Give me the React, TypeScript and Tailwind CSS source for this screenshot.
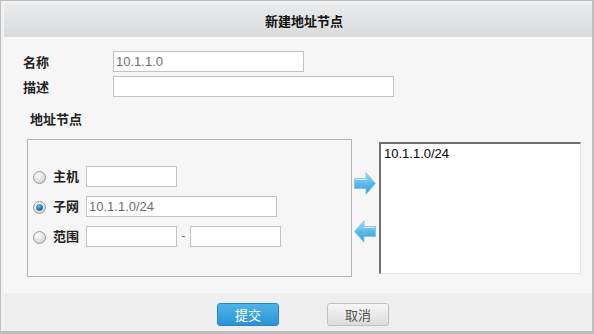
import React from "react";

const cjk = '"Noto Sans CJK SC", "Liberation Sans", sans-serif';
const latin = '"Liberation Sans", Arial, sans-serif';

function Radio({ checked }: { checked?: boolean }) {
  return (
    <svg width="13" height="13" viewBox="0 0 13 13" className="shrink-0">
      <defs>
        <radialGradient id={checked ? "rg1" : "rg0"} cx="40%" cy="35%" r="70%">
          <stop offset="0%" stopColor="#ffffff" />
          <stop offset="100%" stopColor="#cfcfcf" />
        </radialGradient>
        <radialGradient id="dot" cx="40%" cy="35%" r="70%">
          <stop offset="0%" stopColor="#6cc4f4" />
          <stop offset="60%" stopColor="#1a78c2" />
          <stop offset="100%" stopColor="#0c4f8c" />
        </radialGradient>
      </defs>
      <circle cx="6.5" cy="6.5" r="6" fill={`url(#${checked ? "rg1" : "rg0"})`} stroke="#9a9a9a" strokeWidth="1" />
      {checked && <circle cx="6.5" cy="6.5" r="3.3" fill="url(#dot)" />}
    </svg>
  );
}

function Arrow({ dir }: { dir: "right" | "left" }) {
  const id = dir === "right" ? "ag-r" : "ag-l";
  return (
    <svg width="22" height="23" viewBox="0 0 22 23" className={dir === "left" ? "-scale-x-100" : ""}>
      <defs>
        <linearGradient id={id} x1="0" y1="0" x2="0" y2="1">
          <stop offset="0%" stopColor="#a6dcf6" />
          <stop offset="50%" stopColor="#5ab9e9" />
          <stop offset="100%" stopColor="#3b9fd8" />
        </linearGradient>
      </defs>
      <path d="M0.5 6.5 H12 V0.8 L21.5 11.5 L12 22.2 V16.5 H0.5 Z" fill={`url(#${id})`} stroke="#7cc3ea" strokeWidth="0.8" />
      <path d="M1.5 7.5 H12.5" stroke="#d4effc" strokeWidth="1" />
    </svg>
  );
}

function Input({ w, value }: { w: string; value?: string }) {
  return (
    <div
      className={`${w} h-[21px] shrink-0 border border-[#c2c2c2] bg-white pl-[2px] text-[13px] leading-[19px] text-[#6e6e6e]`}
      style={{ fontFamily: latin }}
    >
      {value}
    </div>
  );
}

export default function App() {
  return (
    <div className="w-[594px] h-[334px] border-l border-t border-r-2 border-b-[3px] border-[#bdbdbd] bg-[#f2f2f2] pl-[3px] pt-[3px] flex flex-col">
      {/* header */}
      <div
        className="h-[33px] shrink-0 flex items-center justify-center pl-[12px] bg-gradient-to-b from-[#eaebed] to-[#d9dadc] text-[13px] font-bold text-[#111]"
        style={{ fontFamily: cjk }}
      >
        新建地址节点
      </div>

      {/* body */}
      <div className="h-[256px] shrink-0 bg-[#f6f6f6] pl-[19px] pt-[14px] flex flex-col" style={{ fontFamily: cjk }}>
        <div className="flex items-center h-[21px]">
          <div className="w-[90px] text-[13px] font-bold text-[#222] leading-[21px]">名称</div>
          <Input w="w-[191px]" value="10.1.1.0" />
        </div>
        <div className="flex items-center h-[21px] mt-[4px]">
          <div className="w-[90px] text-[13px] font-bold text-[#222] leading-[21px]">描述</div>
          <Input w="w-[281px]" />
        </div>
        <div className="mt-[14px] ml-[7px] h-[16px] text-[13px] leading-[16px] font-bold text-[#222]">地址节点</div>

        <div className="mt-[12px] ml-[4px] flex">
          {/* group box */}
          <div className="w-[325px] h-[138px] border border-[#a9b5bf] pt-[26px] pl-[5px] flex flex-col gap-[10px]">
            <div className="flex items-center h-[20px]">
              <div className="mt-[2px]"><Radio /></div>
              <div className="ml-[7px] w-[33px] text-[13px] font-bold text-[#222]">主机</div>
              <Input w="w-[91px] h-[20px]" />
            </div>
            <div className="flex items-center h-[20px]">
              <div className="mt-[2px]"><Radio checked /></div>
              <div className="ml-[7px] w-[33px] text-[13px] font-bold text-[#222]">子网</div>
              <Input w="w-[191px]" value="10.1.1.0/24" />
            </div>
            <div className="flex items-center h-[20px]">
              <div className="mt-[2px]"><Radio /></div>
              <div className="ml-[7px] w-[33px] text-[13px] font-bold text-[#222]">范围</div>
              <Input w="w-[91px]" />
              <div className="w-[13px] text-center text-[13px] text-[#777]" style={{ fontFamily: latin }}>-</div>
              <Input w="w-[91px]" />
            </div>
          </div>

          {/* arrows */}
          <div className="ml-[2px] pt-[33px] flex flex-col gap-[25px]">
            <Arrow dir="right" />
            <Arrow dir="left" />
          </div>

          {/* list box */}
          <div
            className="ml-[3px] mt-[3px] w-[202px] h-[132px] bg-white border-t-2 border-l-2 border-t-[#6f6f6f] border-l-[#6f6f6f] border-r border-b border-r-[#e4e4e4] border-b-[#e4e4e4] pl-[3px] pt-[2px] text-[13px] leading-[16px] text-black"
            style={{ fontFamily: latin }}
          >
            10.1.1.0/24
          </div>
        </div>
      </div>

      {/* footer */}
      <div className="flex-1 bg-[#eeeeee] flex justify-center pl-[10px] pt-[10px] gap-[48px]" style={{ fontFamily: cjk }}>
        <div className="w-[62px] h-[23px] rounded-[3px] border border-[#2a86c8] bg-gradient-to-b from-[#4db4e8] to-[#2a93d6] flex items-center justify-center text-[13px] text-white">
          提交
        </div>
        <div className="w-[62px] h-[23px] rounded-[3px] border border-[#c0c0c0] bg-gradient-to-b from-[#f7f7f7] to-[#dcdcdc] flex items-center justify-center text-[13px] text-[#555]">
          取消
        </div>
      </div>
    </div>
  );
}
